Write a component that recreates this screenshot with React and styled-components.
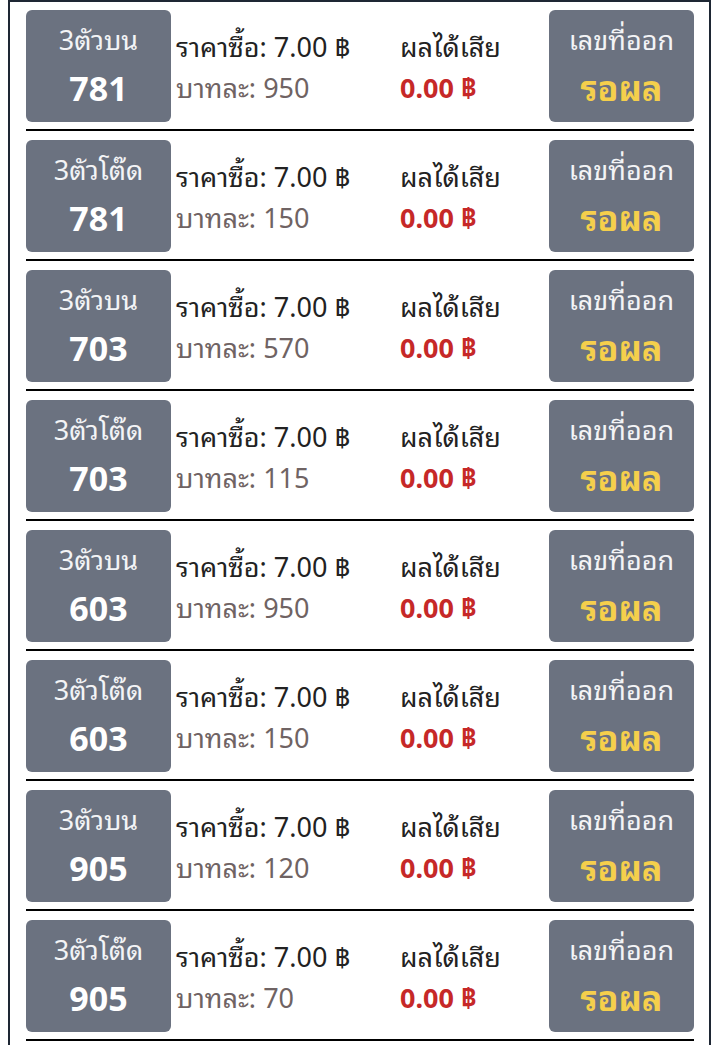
import styled, { createGlobalStyle } from 'styled-components';

const GlobalStyle = createGlobalStyle`
  body {
    margin: 0;
    background: #ffffff;
    font-family: "Noto Sans", "Noto Sans Thai Looped", "Waree", "Loma", "Garuda", "Noto Sans Thai", sans-serif;
  }
`;

const Container = styled.div`
  margin: 0 9px 0 8px;
  padding: 8px 15px 0 16px;
  border: 2px solid #1e2734;
  border-bottom: none;
  min-height: 1045px;
  box-sizing: border-box;
`;

const Row = styled.div`
  display: grid;
  grid-template-columns: 145px 219px 1fr 145px;
  column-gap: 5px;
  align-items: center;
  padding-bottom: 7px;
  border-bottom: 2px solid #000;
  margin-bottom: 9px;
`;

const Badge = styled.div`
  height: 112px;
  box-sizing: border-box;
  padding-bottom: 3px;
  border-radius: 6px;
  background: #6b7280;
  display: flex;
  flex-direction: column;
  align-items: center;
  justify-content: center;
  gap: 7px;
`;

const BadgeLabel = styled.div`
  color: #f3f4f6;
  font-size: 27px;
  line-height: 40px;
`;

const BadgeValue = styled.div`
  color: ${(p) => (p.$pending ? '#f5cf4c' : '#ffffff')};
  font-size: 34px;
  font-weight: 700;
  line-height: 42px;
`;

const Info = styled.div`
  display: flex;
  flex-direction: column;
  gap: 5px;
  padding-top: 2px;
`;

const Line = styled.div`
  font-size: 27px;
  line-height: 36px;
  white-space: nowrap;
  color: ${(p) => p.$color || '#222222'};
  font-weight: ${(p) => (p.$bold ? 700 : 400)};
`;

const rows = [
  { type: '3ตัวบน', num: '781', per: '950' },
  { type: '3ตัวโต๊ด', num: '781', per: '150' },
  { type: '3ตัวบน', num: '703', per: '570' },
  { type: '3ตัวโต๊ด', num: '703', per: '115' },
  { type: '3ตัวบน', num: '603', per: '950' },
  { type: '3ตัวโต๊ด', num: '603', per: '150' },
  { type: '3ตัวบน', num: '905', per: '120' },
  { type: '3ตัวโต๊ด', num: '905', per: '70' },
];

const App = () => {
  return (
    <>
      <GlobalStyle />
      <Container>
        {rows.map((r, i) => (
          <Row key={i}>
            <Badge>
              <BadgeLabel>{r.type}</BadgeLabel>
              <BadgeValue>{r.num}</BadgeValue>
            </Badge>
            <Info>
              <Line>ราคาซื้อ: 7.00 ฿</Line>
              <Line $color="#6f6363">บาทละ: {r.per}</Line>
            </Info>
            <Info>
              <Line>ผลได้เสีย</Line>
              <Line $color="#c62828" $bold>0.00 ฿</Line>
            </Info>
            <Badge>
              <BadgeLabel>เลขที่ออก</BadgeLabel>
              <BadgeValue $pending>รอผล</BadgeValue>
            </Badge>
          </Row>
        ))}
      </Container>
    </>
  );
};

export default App;
